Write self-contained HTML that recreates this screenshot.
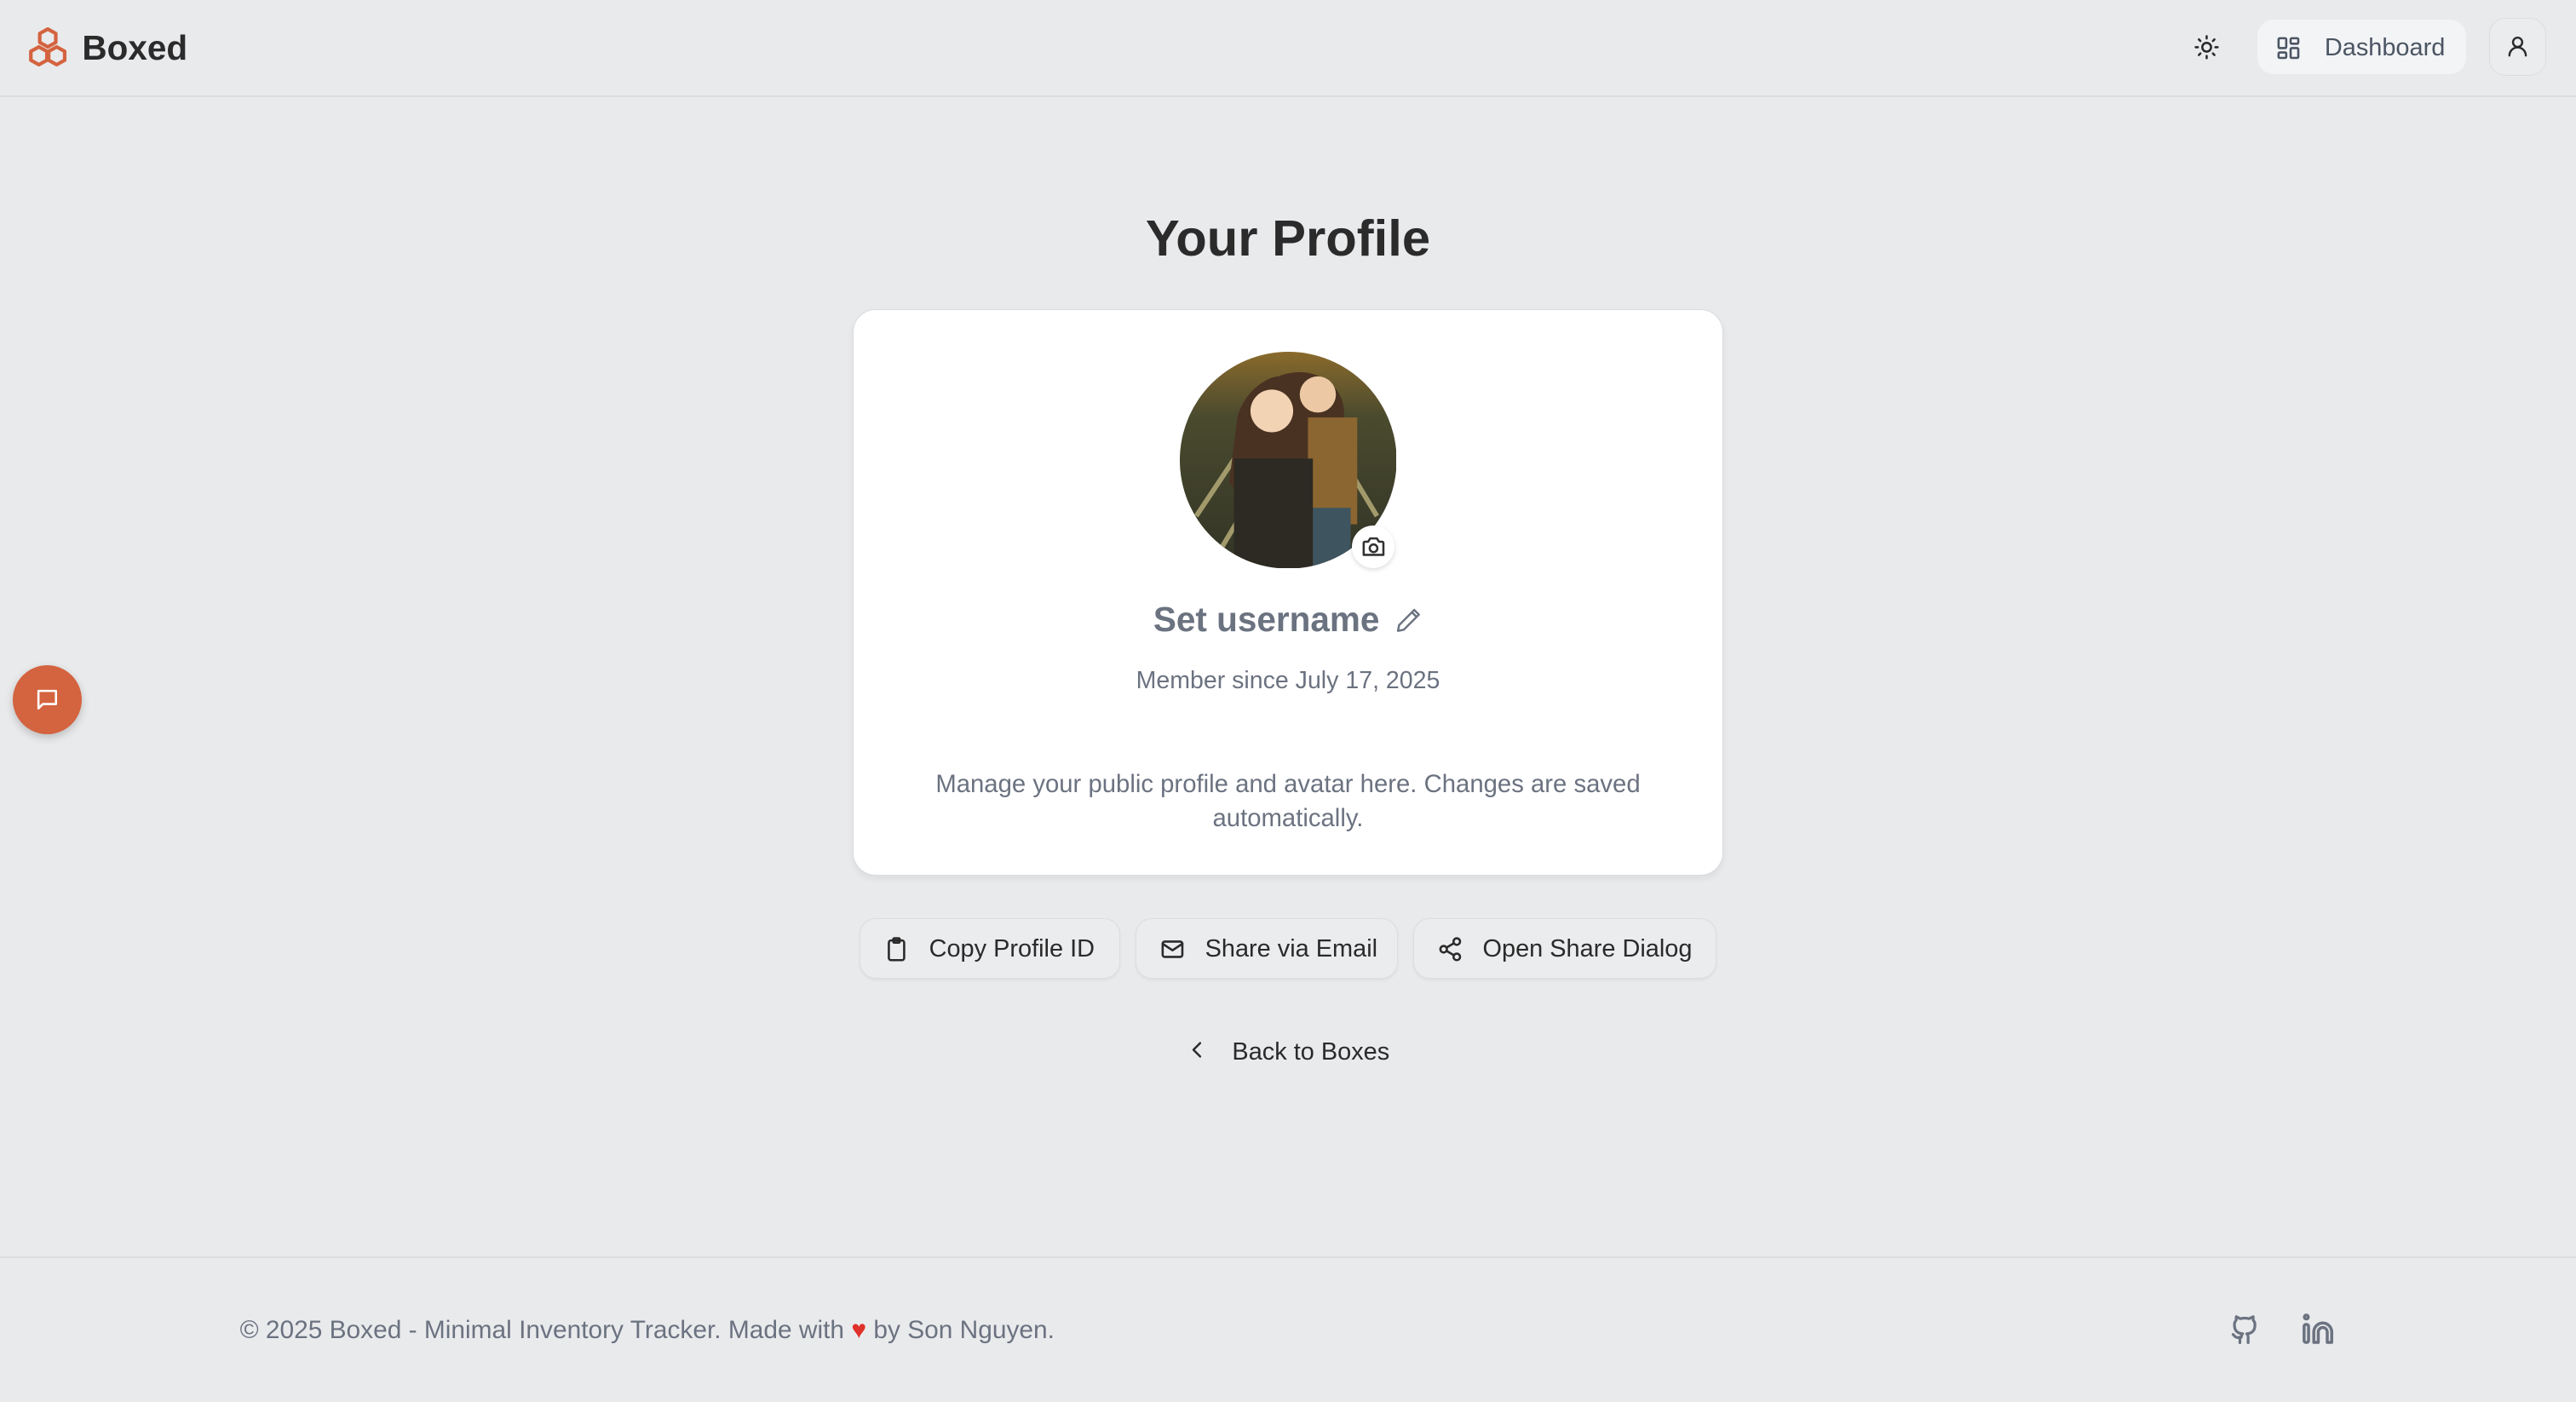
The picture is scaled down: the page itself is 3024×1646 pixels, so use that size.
<!DOCTYPE html>
<html><head><meta charset="utf-8"><style>
*{box-sizing:border-box;margin:0;padding:0}
html,body{width:3024px;height:1646px;overflow:hidden;background:#e9eaec}
#r{zoom:1.928571;width:1568px;height:853.5px;position:relative;font-family:"Liberation Sans",Arial,sans-serif;color:#2a2a2a;background:#e9eaec}
.a{position:absolute}
svg{display:block}
.ic{fill:none;stroke-linecap:round;stroke-linejoin:round}
.btn{position:absolute;top:559px;height:37px;border:1px solid #dcdde0;border-radius:10px;background:#ebecee;box-shadow:0 1px 2px rgba(0,0,0,.05);display:flex;align-items:center;font-size:15px;color:#2a2a2a;padding-top:1px}
.btn svg{margin:0 12px 0 14px}
</style></head><body><div id="r">
<div class="a" style="left:0;top:58px;width:1568px;height:1px;background:#dcdde0"></div>
<svg class="a ic" style="left:16px;top:16px" width="26" height="26" viewBox="0 0 24 24" stroke="#d4633f" stroke-width="2"><path d="M12 1.5l4.5 2.5v5L12 11.5 7.5 9V4z"/><path d="M7 11.5l4.5 2.5v5L7 21.5 2.5 19v-5z"/><path d="M17 11.5l4.5 2.5v5L17 21.5 12.5 19v-5z"/></svg>
<div class="a" style="left:50px;top:17px;font-size:21px;font-weight:bold;color:#2b2b2b">Boxed</div>
<svg class="a ic" style="left:1335px;top:21px" width="16" height="16" viewBox="0 0 24 24" stroke="#2a2a2a" stroke-width="2"><circle cx="12" cy="12" r="4"/><path d="M12 2v2M12 20v2M4.9 4.9l1.4 1.4M17.7 17.7l1.4 1.4M2 12h2M20 12h2M4.9 19.1l1.4-1.4M17.7 6.3l1.4-1.4"/></svg>
<div class="a" style="left:1374px;top:12px;width:127px;height:33px;background:#f3f4f6;border-radius:10px;display:flex;align-items:center;padding-top:2px">
<svg class="ic" style="margin-left:11px" width="16" height="16" viewBox="0 0 24 24" stroke="#4b5563" stroke-width="2"><rect x="3" y="3" width="7" height="9" rx="1"/><rect x="14" y="3" width="7" height="5" rx="1"/><rect x="14" y="12" width="7" height="9" rx="1"/><rect x="3" y="16" width="7" height="5" rx="1"/></svg>
<span style="margin-left:14px;font-size:15px;color:#4b5563">Dashboard</span></div>
<div class="a" style="left:1515px;top:11px;width:35px;height:35px;border:1px solid #dcdde0;border-radius:10px;background:#ebecee"></div>
<svg class="a ic" style="left:1525px;top:21px" width="15" height="15" viewBox="0 0 24 24" stroke="#2a2a2a" stroke-width="2"><circle cx="12" cy="8" r="4.5"/><path d="M4 21a8 8 0 0 1 16 0"/></svg>

<div class="a" style="left:0;top:127px;width:1568px;text-align:center;font-size:31px;font-weight:bold;color:#2b2b2b">Your Profile</div>
<div class="a" style="left:519px;top:188px;width:530px;height:345px;background:#fff;border:1px solid #dcdde0;border-radius:14px;box-shadow:0 2px 4px rgba(0,0,0,.06)"></div>
<svg class="a" style="left:718px;top:214px" width="132" height="132" viewBox="0 0 132 132"><defs><clipPath id="c"><circle cx="66" cy="66" r="66"/></clipPath><linearGradient id="g" x1="0" y1="0" x2="0" y2="1"><stop offset="0" stop-color="#8a6a2c"/><stop offset=".3" stop-color="#4a4a2e"/><stop offset="1" stop-color="#323426"/></linearGradient></defs><g clip-path="url(#c)"><rect width="132" height="132" fill="url(#g)"/><path d="M10 100L50 40M25 120L55 70M120 100L90 50" stroke="#a39a6c" stroke-width="3"/><path d="M60 15c20-8 40 4 40 22v60H85V130H40V90L30 80 35 40c5-18 20-25 25-25z" fill="#4a3222"/><rect x="78" y="40" width="30" height="65" fill="#8c6630"/><rect x="80" y="95" width="24" height="37" fill="#3e5560"/><rect x="33" y="65" width="48" height="67" fill="#2c2a22"/><circle cx="56" cy="36" r="13" fill="#f2d3b4"/><circle cx="84" cy="26" r="11" fill="#ecc9a4"/></g></svg>
<div class="a" style="left:823px;top:320px;width:26px;height:26px;border-radius:50%;background:#fff;box-shadow:0 1px 3px rgba(0,0,0,.15)"></div>
<svg class="a ic" style="left:828px;top:325px" width="16" height="16" viewBox="0 0 24 24" stroke="#333" stroke-width="2"><path d="M4 7h3l2-3h6l2 3h3a1 1 0 0 1 1 1v11H3V8a1 1 0 0 1 1-1z"/><circle cx="12" cy="13" r="3.5"/></svg>
<div class="a" style="left:702px;top:365px;font-size:21px;font-weight:bold;color:#6b7280">Set username</div>
<svg class="a ic" style="left:849px;top:369px" width="17" height="17" viewBox="0 0 24 24" stroke="#6b7280" stroke-width="1.8"><path d="M17 3l4 4L8 20l-5 1 1-5z"/><path d="M15 5l4 4"/></svg>
<div class="a" style="left:519px;top:406px;width:530px;text-align:center;font-size:14.8px;color:#6b7280">Member since July 17, 2025</div>
<div class="a" style="left:545px;top:467px;width:478px;text-align:center;font-size:15.2px;line-height:21px;color:#6b7280">Manage your public profile and avatar here. Changes are saved automatically.</div>

<div class="btn" style="left:523px;width:159px"><svg class="ic" width="16" height="16" viewBox="0 0 24 24" stroke="#2a2a2a" stroke-width="2"><rect x="5" y="4" width="14" height="18" rx="2"/><rect x="9" y="2" width="6" height="4" rx="1"/></svg>Copy Profile ID</div>
<div class="btn" style="left:691px;width:160px"><svg class="ic" width="16" height="16" viewBox="0 0 24 24" stroke="#2a2a2a" stroke-width="2"><rect x="3" y="5" width="18" height="14" rx="2"/><path d="M3 7l9 6 9-6"/></svg>Share via Email</div>
<div class="btn" style="left:860px;width:185px"><svg class="ic" width="16" height="16" viewBox="0 0 24 24" stroke="#2a2a2a" stroke-width="2"><circle cx="18" cy="5" r="3"/><circle cx="6" cy="12" r="3"/><circle cx="18" cy="19" r="3"/><path d="M8.6 13.5l6.8 4M15.4 6.5l-6.8 4"/></svg>Open Share Dialog</div>
<svg class="a ic" style="left:722px;top:632px" width="14" height="14" viewBox="0 0 24 24" stroke="#2a2a2a" stroke-width="2.2"><path d="M15 5l-7 7 7 7"/></svg>
<div class="a" style="left:750px;top:632px;font-size:15px;color:#2a2a2a">Back to Boxes</div>

<div class="a" style="left:8px;top:405px;width:42px;height:42px;border-radius:50%;background:#d4633f;box-shadow:0 2px 5px rgba(0,0,0,.2)"></div>
<svg class="a ic" style="left:21px;top:418px" width="16" height="16" viewBox="0 0 24 24" stroke="#fff" stroke-width="2"><path d="M4 4h16v12H8l-4 4z"/></svg>

<div class="a" style="left:0;top:765px;width:1568px;height:1px;background:#dcdde0"></div>
<div class="a" style="left:146px;top:801px;font-size:15.5px;color:#6b7280">© 2025 Boxed - Minimal Inventory Tracker. Made with <span style="color:#e0302b">♥</span> by Son Nguyen.</div>
<svg class="a ic" style="left:1356px;top:799px" width="20" height="20" viewBox="0 0 24 24" stroke="#6b7280" stroke-width="2"><path d="M9 22v-4c-3 1-4-1-5-2M15 22v-4a3 3 0 0 0-1-2.5c3-.3 6-1.5 6-6.5a5 5 0 0 0-1.3-3.5V3l-3 1.5a12 12 0 0 0-6.4 0L6.3 3v2.5A5 5 0 0 0 5 9c0 5 3 6.2 6 6.5A3 3 0 0 0 10 18"/></svg>
<svg class="a ic" style="left:1401px;top:799px" width="22" height="20" viewBox="0 0 24 22" stroke="#6b7280" stroke-width="2"><circle cx="3" cy="3" r="1.3"/><rect x="1.5" y="8" width="3" height="12" rx="1.2"/><path d="M8 20V13a6 6 0 0 1 12 0v7h-3v-7a3 3 0 0 0-6 0v7z"/></svg>
</div></body></html>
